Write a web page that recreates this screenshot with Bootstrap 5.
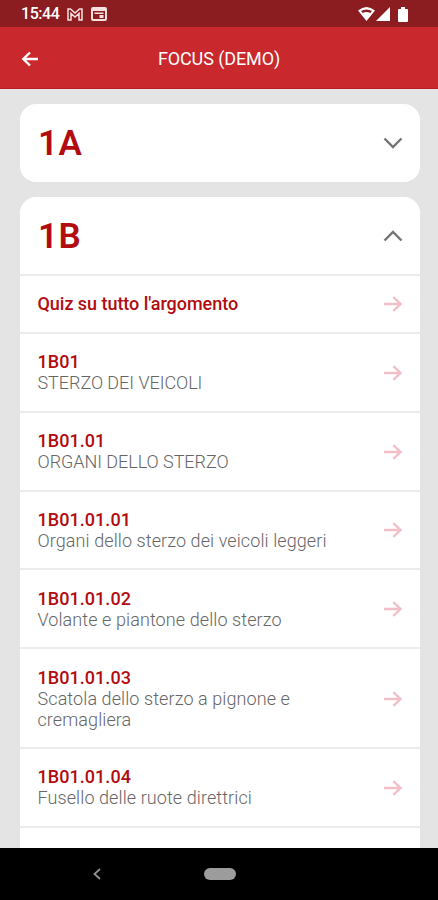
<!DOCTYPE html>
<html lang="it">
<head>
<meta charset="utf-8">
<meta name="viewport" content="width=device-width, initial-scale=1">
<title>Focus (Demo)</title>
<link href="https://cdn.jsdelivr.net/npm/bootstrap@5.3.0/dist/css/bootstrap.min.css" rel="stylesheet">
<style>
body{font-family:Roboto,"Liberation Sans",sans-serif;background:#e4e4e4;color:#858585}
svg{display:block;flex-shrink:0}
.screen{height:900px}
.status{height:27px;background:#8b1c20;padding:1px 30px 0 21px}
.clock{font-size:16px;font-weight:500;line-height:26px;letter-spacing:-.45px;width:38px}
.appbar{height:62px;background:#c9282d;border-bottom:1px solid #b91d22;padding:2px 20px 0}
.appbar h1{font-size:18px;font-weight:400;letter-spacing:-.1px;line-height:24px}
.appbar svg,.appbar .balance{width:20px}
.content{padding:15px 18px 0 20px}
.topic{border-radius:16px;overflow:hidden}
.topic-head{height:77.5px;padding:1px 17px 0 18px}
.topic-head.open{height:76.8px}
.topic-head h2{color:#b20b10;font-size:35px;font-weight:600;letter-spacing:.6px;line-height:40px;padding-top:2px}
.topics{gap:15.5px}
.entry{border-top:2px solid #ececec;padding:17.2px 17px 17.7px 17.5px;font-size:18px;line-height:21px}
.entry svg{margin-top:1.2px}
.entry strong{display:block;color:#b20b10;font-weight:500;letter-spacing:-.04px}
.entry .code{letter-spacing:.05px}
.entry .desc{font-weight:300;max-width:310px;color:#666;letter-spacing:.09px}
.entry .desc.text-uppercase{letter-spacing:-.05px}
.entry:last-child{height:60px}
.navkeys{height:52px;background:#000;padding-left:91px}
.home{width:32px;height:12px;background:#9c9c9c;margin-left:101px}
</style>
</head>
<body>
<svg class="d-none">
<symbol id="arrow" viewBox="0 0 20 20"><path d="M1 10H18M10.3 3.2L17.6 10L10.3 16.8" fill="none" stroke="#f0bfc7" stroke-width="2.3"/></symbol>
</svg>
<div class="screen d-flex flex-column overflow-hidden">
<header class="flex-shrink-0">
<div class="status d-flex align-items-center text-white">
<span class="clock">15:44</span>
<svg class="ms-2" width="16" height="13" viewBox="0 0 16 13" fill="none" stroke="#f7dfdf"><path d="M1 1V12H4V5.5L8 9L12 5.5V12H15V1L12.5 1L8 5L3.500 1Z" stroke-width="1.5"/></svg>
<svg class="ms-2" width="16" height="14" viewBox="0 0 16 14"><path fill-rule="evenodd" fill="#f7dfdf" d="M2 0H14Q16 0 16 2V12Q16 14 14 14H2Q0 14 0 12V2Q0 0 2 0ZM2 4V12H14V4ZM3.500 5.500H12.500V7H3.500ZM8.500 8H12.500V11H8.500Z"/></svg>
<svg class="ms-auto" width="17" height="14" viewBox="0 0 17 14"><path fill="#fff" fill-rule="evenodd" d="M0 3.500Q8.500-3.500 17 3.500L8.500 14ZM3 4L4.700 6Q8.500 4 12.300 6L14 4Q8.500 .8 3 4Z"/></svg>
<svg width="15" height="14" viewBox="0 0 15 14" class="me-2"><path d="M1 14L15 0V14Z" fill="#fff"/></svg>
<svg width="10" height="15" viewBox="0 0 10 15"><path d="M1 2H3V0H7V2H9Q10 2 10 3V14Q10 15 9 15H1Q0 15 0 14V3Q0 2 1 2Z" fill="#fff"/></svg>
</div>
<nav class="appbar d-flex align-items-center justify-content-between text-white">
<svg height="18" viewBox="0 0 20 18"><path d="M18 9H3M10 2.500L3.300 9L10 15.500" fill="none" stroke="#fff" stroke-width="2.400"/></svg>
<h1 class="m-0">FOCUS (DEMO)</h1><span class="balance"></span>
</nav>
</header>
<main class="content flex-grow-1 overflow-hidden">
<div class="topics d-flex flex-column">
<section class="topic bg-white"><div class="topic-head d-flex align-items-center justify-content-between"><h2 class="m-0">1A</h2><svg width="20" height="14" viewBox="0 0 20 14"><path d="M1.500 2.500L10 11L18.500 2.500" fill="none" stroke="#747474" stroke-width="2.400"/></svg></div></section>
<section class="topic bg-white"><div class="topic-head open d-flex align-items-center justify-content-between"><h2 class="m-0">1B</h2><svg width="20" height="14" viewBox="0 0 20 14"><path d="M1.500 11.500L10 3L18.500 11.500" fill="none" stroke="#747474" stroke-width="2.400"/></svg></div>
<div class="entry d-flex align-items-center justify-content-between"><strong>Quiz su tutto l'argomento</strong><svg width="20" height="20"><use href="#arrow"/></svg></div>
<div class="entry d-flex align-items-center justify-content-between"><div><strong class="code">1B01</strong><div class="desc text-uppercase">STERZO DEI VEICOLI</div></div><svg width="20" height="20"><use href="#arrow"/></svg></div>
<div class="entry d-flex align-items-center justify-content-between"><div><strong class="code">1B01.01</strong><div class="desc text-uppercase">ORGANI DELLO STERZO</div></div><svg width="20" height="20"><use href="#arrow"/></svg></div>
<div class="entry d-flex align-items-center justify-content-between"><div><strong class="code">1B01.01.01</strong><div class="desc">Organi dello sterzo dei veicoli leggeri</div></div><svg width="20" height="20"><use href="#arrow"/></svg></div>
<div class="entry d-flex align-items-center justify-content-between"><div><strong class="code">1B01.01.02</strong><div class="desc">Volante e piantone dello sterzo</div></div><svg width="20" height="20"><use href="#arrow"/></svg></div>
<div class="entry d-flex align-items-center justify-content-between"><div><strong class="code">1B01.01.03</strong><div class="desc">Scatola dello sterzo a pignone e cremagliera</div></div><svg width="20" height="20"><use href="#arrow"/></svg></div>
<div class="entry d-flex align-items-center justify-content-between"><div><strong class="code">1B01.01.04</strong><div class="desc">Fusello delle ruote direttrici</div></div><svg width="20" height="20"><use href="#arrow"/></svg></div>
<div class="entry"></div>
</section>
</div>
</main>
<footer class="navkeys flex-shrink-0 d-flex align-items-center">
<svg width="12" height="12" viewBox="0 0 12 12"><path d="M9 1L3.500 6L9 11" fill="none" stroke="#929292" stroke-width="1.800"/></svg>
<span class="home rounded-pill"></span>
</footer>
</div>
<script src="https://cdn.jsdelivr.net/npm/bootstrap@5.3.0/dist/js/bootstrap.bundle.min.js"></script>
</body>
</html>
